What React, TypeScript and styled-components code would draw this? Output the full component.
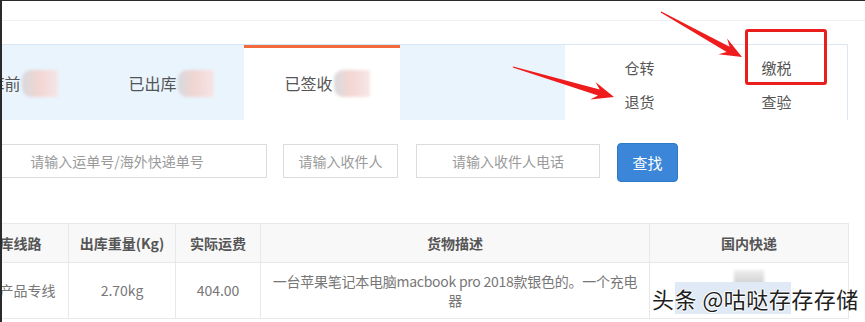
import React from "react";
import styled, { createGlobalStyle } from "styled-components";

const GlobalStyle = createGlobalStyle`
  html, body { margin: 0; padding: 0; background: #fff; }
  body { font-family: "Noto Sans CJK SC", "Noto Sans", sans-serif; }
  * { box-sizing: border-box; }
`;

const Frame = styled.div`
  position: relative;
  width: 865px;
  height: 322px;
  overflow: hidden;
  background: #fff;
`;

const Page = styled.div`
  width: 865px;
  height: 322px;
  border-top: 1px solid #2a2a2a;
  border-left: 2px solid #2a2a2a;
  overflow: hidden;
`;

const TopStrip = styled.div`
  height: 20px;
  border-bottom: 1px solid #eef0f2;
`;

const TabsRow = styled.div`
  display: flex;
  margin-top: 23px;
  margin-left: -70px;
  height: 76px;
`;

const TabList = styled.div`
  display: flex;
  width: 633px;
  background: #eaf4fd;
  border-top: 1px solid #d6e6f4;
`;

const Tab = styled.div<{ $active?: boolean }>`
  width: 156px;
  display: flex;
  align-items: center;
  justify-content: center;
  padding-left: 10px;
  padding-bottom: 2px;
  font-size: 16px;
  color: #555;
  background: ${(p) => (p.$active ? "#fff" : "transparent")};
  border-top: ${(p) => (p.$active ? "3px solid #f26a3b" : "3px solid transparent")};
`;

const Blur = styled.span`
  display: inline-block;
  width: 36px;
  height: 27px;
  margin-left: 1px;
  border-radius: 9px 2px 2px 9px;
  background: linear-gradient(90deg, #d6d6da 0%, #f2d2ce 45%, #f7e4e4 100%);
  filter: blur(1.5px);
  opacity: 0.9;
`;

const ActionPanel = styled.div`
  width: 283px;
  border: 1px solid #dde7f1;
  border-left: none;
  border-bottom: none;
  display: grid;
  grid-template-columns: 1fr 1fr;
  grid-auto-rows: 24px;
  row-gap: 10px;
  padding-top: 10px;
  background: #fff;
`;

const Action = styled.div<{ $shift?: number }>`
  font-size: 15px;
  color: #555;
  display: flex;
  align-items: center;
  justify-content: center;
  padding-left: ${(p) => p.$shift ?? 0}px;
`;

const SearchRow = styled.div`
  display: flex;
  align-items: flex-start;
  margin-top: 23px;
  margin-left: -35px;
  height: 39px;
`;

const Input = styled.input<{ $w: number; $gap: number }>`
  width: ${(p) => p.$w}px;
  height: 34px;
  margin-top: 1px;
  margin-right: ${(p) => p.$gap}px;
  border: 1px solid #dcdcdc;
  border-radius: 0;
  font-family: inherit;
  font-size: 14px;
  text-align: center;
  color: #333;
  outline: none;
  &::placeholder { color: #9a9a9a; }
`;

const Button = styled.button`
  width: 61px;
  height: 39px;
  border: 1px solid #2f78c8;
  border-radius: 4px;
  background: #3b86d8;
  color: #fff;
  font-family: inherit;
  font-size: 15px;
  padding: 0;
`;

const Table = styled.table`
  margin-top: 41px;
  margin-left: -44px;
  border-collapse: collapse;
  table-layout: fixed;
  width: 890px;
  font-size: 14px;
`;

const Th = styled.th<{ $w: number }>`
  width: ${(p) => p.$w}px;
  height: 39px;
  background: #f8f8f8;
  border: 1px solid #e8e8e8;
  color: #555;
  font-weight: 700;
  padding: 0 6px;
  text-align: center;
`;

const Td = styled.td<{ $tight?: boolean }>`
  height: 56px;
  border: 1px solid #e8e8e8;
  color: #777;
  text-align: center;
  padding: 0 6px;
  line-height: 19px;
  vertical-align: middle;
  word-break: ${(p) => (p.$tight ? "break-all" : "normal")};
  letter-spacing: ${(p) => (p.$tight ? "-0.25px" : "normal")};
`;

const GreyBlur = styled.span`
  display: inline-block;
  width: 30px;
  height: 26px;
  margin-top: -18px;
  background: linear-gradient(180deg, #eeeeee 0%, #cfcfcf 55%, #dedede 100%);
  filter: blur(1.5px);
`;

const Overlay = styled.svg`
  position: absolute;
  left: 0;
  top: 0;
  pointer-events: none;
`;

const RedBox = styled.div`
  position: absolute;
  left: 745px;
  top: 29px;
  width: 82px;
  height: 56px;
  border: 3px solid #ea1f1b;
  border-radius: 3px;
`;

const Watermark = styled.div`
  position: absolute;
  left: 652px;
  top: 283px;
  font-size: 22px;
  line-height: 30px;
  color: #1e1e1e;
  letter-spacing: 0.5px;
  text-shadow: 1px 0 0 #fff, -1px 0 0 #fff, 0 1px 0 #fff, 0 -1px 0 #fff;
  white-space: nowrap;
`;

const Highlight = styled.span`
  background: #dfeaf6;
`;

type Pt = [number, number];

function arrowPoints(tail: Pt, tip: Pt): string {
  const dx = tip[0] - tail[0];
  const dy = tip[1] - tail[1];
  const len = Math.hypot(dx, dy);
  const ux = dx / len;
  const uy = dy / len;
  const nx = -uy;
  const ny = ux;
  const L = 22;
  const W = 9;
  const w = 3;
  const neck = L * 0.72;
  const at = (back: number, side: number): Pt => [
    tip[0] - ux * back + nx * side,
    tip[1] - uy * back + ny * side,
  ];
  const pts: Pt[] = [
    [tail[0] + nx * 0.6, tail[1] + ny * 0.6],
    at(neck, w),
    at(L, W),
    tip,
    at(L, -W),
    at(neck, -w),
    [tail[0] - nx * 0.6, tail[1] - ny * 0.6],
  ];
  return pts.map((p) => `${p[0].toFixed(1)},${p[1].toFixed(1)}`).join(" ");
}

export default function App() {
  return (
    <>
      <GlobalStyle />
      <Frame>
        <Page>
          <TopStrip />
          <TabsRow>
            <TabList>
              <Tab>出库前<Blur /></Tab>
              <Tab>已出库<Blur /></Tab>
              <Tab $active>已签收<Blur /></Tab>
            </TabList>
            <ActionPanel>
              <Action $shift={8}>仓转</Action>
              <Action>缴税</Action>
              <Action $shift={8}>退货</Action>
              <Action>查验</Action>
            </ActionPanel>
          </TabsRow>
          <SearchRow>
            <Input $w={300} $gap={16} placeholder="请输入运单号/海外快递单号" />
            <Input $w={115} $gap={18} placeholder="请输入收件人" />
            <Input $w={184} $gap={17} placeholder="请输入收件人电话" />
            <Button>查找</Button>
          </SearchRow>
          <Table>
            <thead>
              <tr>
                <Th $w={110}>出库线路</Th>
                <Th $w={107}>出库重量(Kg)</Th>
                <Th $w={85}>实际运费</Th>
                <Th $w={389}>货物描述</Th>
                <Th $w={199}>国内快递</Th>
              </tr>
            </thead>
            <tbody>
              <tr>
                <Td>数码产品专线</Td>
                <Td>2.70kg</Td>
                <Td>404.00</Td>
                <Td $tight>一台苹果笔记本电脑macbook pro 2018款银色的。一个充电器</Td>
                <Td><GreyBlur /></Td>
              </tr>
            </tbody>
          </Table>
        </Page>
        <Overlay width={865} height={322} viewBox="0 0 865 322">
          <polygon points={arrowPoints([661, 12], [742, 57])} fill="#ee1c1c" />
          <polygon points={arrowPoints([513, 67], [614, 97])} fill="#ee1c1c" />
        </Overlay>
        <RedBox />
        <Watermark>
          头<Highlight>条 @咕哒存</Highlight>存存储
        </Watermark>
      </Frame>
    </>
  );
}
